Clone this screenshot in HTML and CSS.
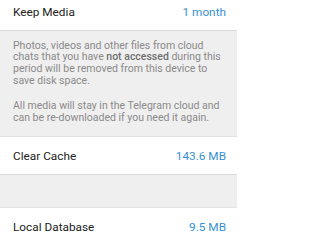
FILE: index.html
```html
<!DOCTYPE html>
<html>
<head>
<meta charset="utf-8">
<link rel="stylesheet" href="styles.css">
</head>
<body>
<div class="screen">
  <div class="row"><span class="label">Keep Media</span><span class="value">1 month</span></div>
  <div class="info">
    <p>Photos, videos and other files from cloud chats that you have <b>not accessed</b> during this period will be removed from this device to save disk space.</p>
    <p>All media will stay in the Telegram cloud and can be re-downloaded if you need it again.</p>
  </div>
  <div class="row"><span class="label">Clear Cache</span><span class="value">143.6 MB</span></div>
  <div class="gap"></div>
  <div class="row"><span class="label">Local Database</span><span class="value">9.5 MB</span></div>
</div>
</body>
</html>
```
FILE: styles.css
```css
html, body {
  margin: 0;
  padding: 0;
  background: #ffffff;
  overflow: hidden;
}
body {
  width: 237px;
  height: 242px;
}
.screen {
  width: 237px;
  height: 249px;
  margin-top: -7px;
  font-family: Roboto, "Noto Sans", sans-serif;
  display: flex;
  flex-direction: column;
  overflow: hidden;
}
.row {
  flex: none;
  height: 36px;
  background: #ffffff;
  border-bottom: 1px solid #d9d9d9;
  display: flex;
  align-items: center;
  justify-content: space-between;
  padding: 1px 11px 0 13px;
  font-size: 11.8px;
}
.row:last-child {
  border-bottom: none;
}
.label {
  color: #222222;
}
.value {
  color: #3590d2;
}
.info {
  flex: none;
  background: #efefef;
  border-bottom: 1px solid #e2e2e2;
  padding: 8.5px 12px 12.5px 13px;
  color: #8a8a8a;
  font-size: 10.5px;
  line-height: 11.8px;
}
.info p {
  margin: 0;
}
.info p + p {
  margin-top: 13.2px;
}
.info b {
  font-weight: 500;
  color: #6f6f6f;
}
.gap {
  flex: none;
  height: 32px;
  background: #efefef;
  border-bottom: 1px solid #e2e2e2;
}
```
